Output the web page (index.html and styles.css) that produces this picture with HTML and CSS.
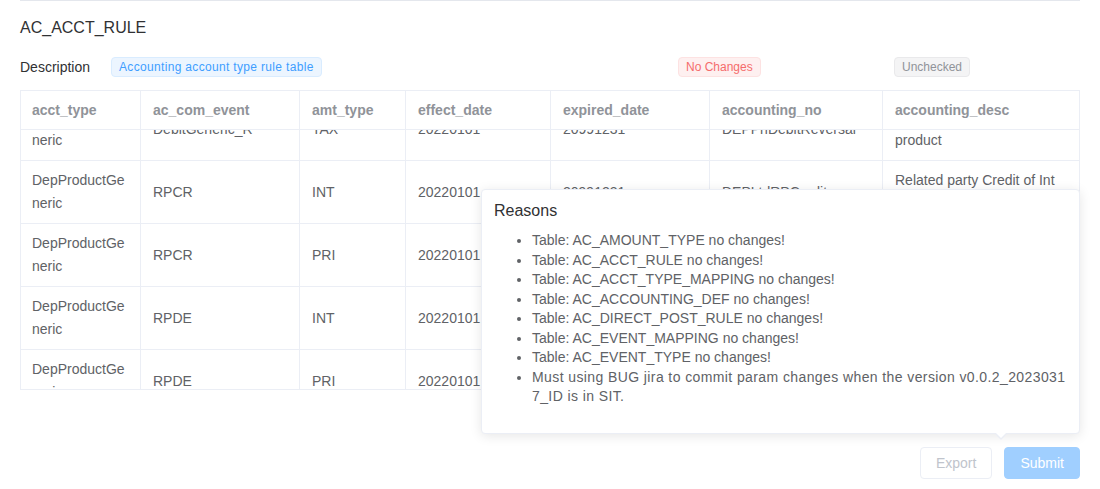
FILE: index.html
```html
<!DOCTYPE html>
<html lang="en">
<head>
<meta charset="utf-8">
<title>AC_ACCT_RULE</title>
<link rel="stylesheet" href="styles.css">
</head>
<body>
<div class="page">
  <div class="divider"></div>
  <h2 class="title">AC_ACCT_RULE</h2>
  <div class="desc-row">
    <span class="desc-label">Description</span>
    <span class="tag tag-primary">Accounting account type rule table</span>
    <span class="tag tag-danger">No Changes</span>
    <span class="tag tag-info">Unchecked</span>
  </div>

  <div class="table">
    <div class="grid thead">
      <div class="cell th">acct_type</div>
      <div class="cell th">ac_com_event</div>
      <div class="cell th">amt_type</div>
      <div class="cell th">effect_date</div>
      <div class="cell th">expired_date</div>
      <div class="cell th">accounting_no</div>
      <div class="cell th">accounting_desc</div>
    </div>
    <div class="tbody">
      <div class="grid tbody-inner">
        <div class="cell td"><div class="c">DepProductGeneric</div></div>
        <div class="cell td"><div class="c">DebitGeneric_R</div></div>
        <div class="cell td"><div class="c">TAX</div></div>
        <div class="cell td"><div class="c">20220101</div></div>
        <div class="cell td"><div class="c">20991231</div></div>
        <div class="cell td"><div class="c">DEPPhDebitReversal</div></div>
        <div class="cell td"><div class="c">Dep Ph Debit Reversal of product</div></div>

        <div class="cell td"><div class="c">DepProductGeneric</div></div>
        <div class="cell td"><div class="c">RPCR</div></div>
        <div class="cell td"><div class="c">INT</div></div>
        <div class="cell td"><div class="c">20220101</div></div>
        <div class="cell td"><div class="c">20991231</div></div>
        <div class="cell td"><div class="c">DEPLtdRPCredit</div></div>
        <div class="cell td"><div class="c">Related party Credit of Int product</div></div>

        <div class="cell td"><div class="c">DepProductGeneric</div></div>
        <div class="cell td"><div class="c">RPCR</div></div>
        <div class="cell td"><div class="c">PRI</div></div>
        <div class="cell td"><div class="c">20220101</div></div>
        <div class="cell td"><div class="c">20991231</div></div>
        <div class="cell td"><div class="c">DEPLtdRPCredit</div></div>
        <div class="cell td"><div class="c">Related party Credit of Pri product</div></div>

        <div class="cell td"><div class="c">DepProductGeneric</div></div>
        <div class="cell td"><div class="c">RPDE</div></div>
        <div class="cell td"><div class="c">INT</div></div>
        <div class="cell td"><div class="c">20220101</div></div>
        <div class="cell td"><div class="c">20991231</div></div>
        <div class="cell td"><div class="c">DEPLtdRPDebit</div></div>
        <div class="cell td"><div class="c">Related party Debit of Int product</div></div>

        <div class="cell td"><div class="c">DepProductGeneric</div></div>
        <div class="cell td"><div class="c">RPDE</div></div>
        <div class="cell td"><div class="c">PRI</div></div>
        <div class="cell td"><div class="c">20220101</div></div>
        <div class="cell td"><div class="c">20991231</div></div>
        <div class="cell td"><div class="c">DEPLtdRPDebit</div></div>
        <div class="cell td"><div class="c">Related party Debit of Pri product</div></div>
      </div>
    </div>
  </div>

  <div class="actions">
    <button class="btn btn-disabled">Export</button>
    <button class="btn btn-primary">Submit</button>
  </div>

  <div class="popover">
    <div class="popover-title">Reasons</div>
    <ul class="reasons">
      <li>Table: AC_AMOUNT_TYPE no changes!</li>
      <li>Table: AC_ACCT_RULE no changes!</li>
      <li>Table: AC_ACCT_TYPE_MAPPING no changes!</li>
      <li>Table: AC_ACCOUNTING_DEF no changes!</li>
      <li>Table: AC_DIRECT_POST_RULE no changes!</li>
      <li>Table: AC_EVENT_MAPPING no changes!</li>
      <li>Table: AC_EVENT_TYPE no changes!</li>
      <li class="note">Must using BUG jira to commit param changes when the version v0.0.2_20230317_ID is in SIT.</li>
    </ul>
  </div>
</div>
</body>
</html>
```

FILE: styles.css
```css
* { box-sizing: border-box; }

html, body {
  margin: 0;
  padding: 0;
  background: #ffffff;
}

body {
  font-family: "Liberation Sans", Arial, sans-serif;
  font-size: 14px;
  color: #606266;
}

.page {
  position: relative;
  width: 1100px;
  height: 489px;
  padding: 0 20px;
  overflow: hidden;
}

.divider {
  height: 1px;
  background: #e4e7ed;
}

.title {
  margin: 16px 0 0;
  font-size: 16px;
  font-weight: normal;
  line-height: 22px;
  color: #303133;
}

.desc-row {
  display: grid;
  grid-template-columns: 91px 567px 216px 1fr;
  align-items: center;
  margin-top: 18px;
  height: 20px;
}

.desc-label {
  font-size: 14px;
  line-height: 20px;
  color: #303133;
}

.tag {
  justify-self: start;
  display: inline-block;
  height: 20px;
  padding: 0 7px;
  font-size: 12px;
  line-height: 18px;
  border: 1px solid;
  border-radius: 4px;
  white-space: nowrap;
}

.tag-primary {
  background: #ecf5ff;
  border-color: #d9ecff;
  color: #409eff;
  letter-spacing: 0.33px;
}

.tag-danger {
  background: #fef0f0;
  border-color: #fde2e2;
  color: #f56c6c;
}

.tag-info {
  background: #f4f4f5;
  border-color: #e9e9eb;
  color: #909399;
}

.table {
  margin-top: 13px;
  width: 1060px;
  border: 1px solid #ebeef5;
}

.grid {
  display: grid;
  grid-template-columns: 120px 159px 106px 145px 159px 173px 196px;
}

.cell {
  display: flex;
  align-items: center;
  padding: 0 12px;
  border-right: 1px solid #ebeef5;
  border-bottom: 1px solid #ebeef5;
  line-height: 23px;
  overflow-wrap: anywhere;
  word-break: normal;
}

.cell:nth-child(7n) { border-right: none; }
.cell:nth-child(7n+1) { padding-left: 11px; }

.th {
  height: 39px;
  font-weight: bold;
  color: #909399;
}

.tbody {
  height: 259px;
  overflow: hidden;
}

.tbody-inner {
  margin-top: -32px;
}

.td {
  height: 63px;
  color: #606266;
}

.c {
  min-width: 0;
  width: 100%;
}

.actions {
  display: flex;
  justify-content: flex-end;
  gap: 12px;
  margin-top: 57px;
}

.btn {
  height: 32px;
  padding: 0 15px;
  font-family: "Liberation Sans", Arial, sans-serif;
  font-size: 14px;
  border-radius: 4px;
  border: 1px solid;
  background: #ffffff;
}

.btn-disabled {
  border-color: #ebeef5;
  color: #c0c4cc;
}

.btn-primary {
  background: #a0cfff;
  border-color: #a0cfff;
  color: #ffffff;
}

.popover {
  position: absolute;
  left: 481px;
  top: 189px;
  width: 599px;
  padding: 12px;
  background: #ffffff;
  border: 1px solid #ebeef5;
  border-radius: 4px;
  box-shadow: 0 2px 12px 0 rgba(0, 0, 0, 0.1);
  z-index: 10;
}

.popover::before,
.popover::after {
  content: "";
  position: absolute;
  left: 513px;
  width: 0;
  height: 0;
  border-left: 6px solid transparent;
  border-right: 6px solid transparent;
}

.popover::before {
  bottom: -7px;
  border-top: 6px solid #ebeef5;
}

.popover::after {
  bottom: -5px;
  border-top: 6px solid #ffffff;
}

.popover-title {
  font-size: 16px;
  line-height: 18px;
  color: #303133;
}

.reasons {
  margin: 11px 0 14px;
  padding-left: 38px;
  font-size: 14px;
  line-height: 19.5px;
  color: #606266;
}

.reasons li.note {
  word-break: break-all;
  letter-spacing: 0.4px;
}
```
